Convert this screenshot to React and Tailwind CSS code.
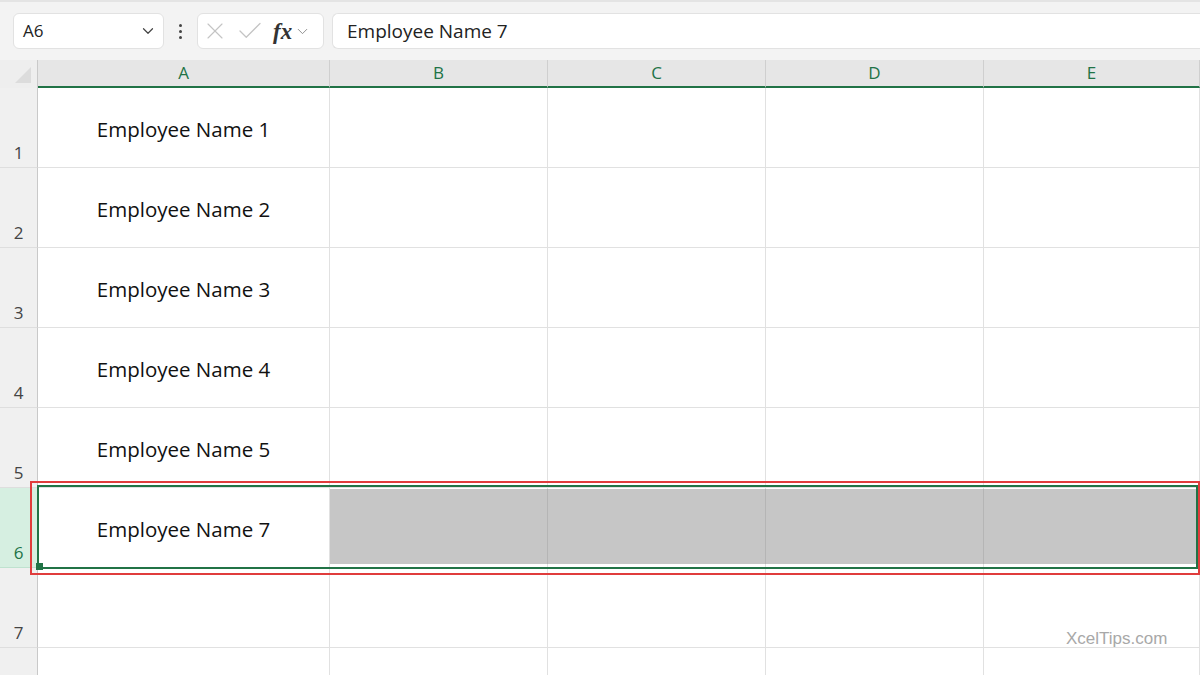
import { ChevronDown, X, Check } from 'lucide-react';

const COLS = ['A', 'B', 'C', 'D', 'E'];
const COL_W = ['w-[292px]', 'w-[218px]', 'w-[218px]', 'w-[218px]', 'flex-1'];

const ROWS = [
  { n: 1, text: 'Employee Name 1' },
  { n: 2, text: 'Employee Name 2' },
  { n: 3, text: 'Employee Name 3' },
  { n: 4, text: 'Employee Name 4' },
  { n: 5, text: 'Employee Name 5' },
  { n: 6, text: 'Employee Name 7', active: true },
  { n: 7, text: '' },
  { n: 8, text: '', hideNum: true },
];

function Toolbar() {
  return (
    <div className="flex h-[60px] items-center border-t-2 border-[#e4e4e4] bg-[#f3f3f3] pl-[13px]">
      <div className="flex h-[36px] w-[151px] items-center justify-between rounded-[6px] border border-[#e2e2e2] bg-white pl-[9px] pr-[6px] text-[17px] text-[#222]">
        <span>A6</span>
        <ChevronDown size={18} strokeWidth={1.6} className="text-[#444]" />
      </div>
      <div className="flex w-[33px] flex-col items-center gap-[3px]">
        <span className="h-[3px] w-[3px] rounded-full bg-[#444]" />
        <span className="h-[3px] w-[3px] rounded-full bg-[#444]" />
        <span className="h-[3px] w-[3px] rounded-full bg-[#444]" />
      </div>
      <div className="flex h-[36px] w-[127px] items-center rounded-[6px] border border-[#e2e2e2] bg-white pl-[3px]">
        <X size={28} strokeWidth={1} className="text-[#c4c4c4]" />
        <Check size={30} strokeWidth={1} className="ml-[6px] text-[#c4c4c4]" />
        <span className="ml-[8px] font-['Liberation_Serif',serif] text-[23px] font-bold italic leading-none text-[#333]">
          fx
        </span>
        <ChevronDown size={17} strokeWidth={1.3} className="ml-[2px] text-[#888]" />
      </div>
      <div className="ml-[8px] flex h-[36px] flex-1 items-center rounded-l-[6px] border border-r-0 border-[#e2e2e2] bg-white pl-[14px] text-[19px] text-[#222]">
        Employee Name 7
      </div>
    </div>
  );
}

function HeaderRow() {
  return (
    <div className="flex h-[28px]">
      <div className="relative w-[38px] shrink-0 border-r border-[#c9c9c9] bg-[#eeeeee]">
        <svg width="20" height="20" className="absolute bottom-[3px] right-[4px]" viewBox="0 0 20 20">
          <polygon points="18,2 18,18 2,18" fill="#dcdcdc" />
        </svg>
      </div>
      {COLS.map((c, i) => (
        <div
          key={c}
          className={`${COL_W[i]} flex items-center justify-center border-b-2 border-r border-b-[#217346] border-r-[#cfcfcf] bg-[#e6e6e6] text-[17px] text-[#217346]`}
        >
          {c}
        </div>
      ))}
    </div>
  );
}

function Row({ row }) {
  return (
    <div className="flex h-[80px]">
      <div
        className={`flex w-[38px] shrink-0 items-end justify-center border-b border-r pb-[2px] text-[17px] ${
          row.active
            ? 'border-b-[#bfe2cf] border-r-[#c9c9c9] bg-[#d6efe1] text-[#217346]'
            : 'border-b-[#dedede] border-r-[#c9c9c9] bg-[#f0f0f0] text-[#444]'
        }`}
      >
        {row.hideNum ? '' : row.n}
      </div>
      {COLS.map((c, i) => (
        <div
          key={c}
          className={`${COL_W[i]} flex items-center justify-center border-b border-r border-[#e1e1e1] pt-[4px] text-[20.5px] font-medium text-[#111]`}
        >
          {i === 0 ? row.text : ''}
        </div>
      ))}
    </div>
  );
}

export default function App() {
  return (
    <div className="relative h-[675px] w-[1200px] overflow-hidden bg-white font-['Open_Sans',sans-serif]">
      <Toolbar />
      <HeaderRow />
      {ROWS.map((r) => (
        <Row key={r.n} row={r} />
      ))}

      {/* selected row: grey fill on B:E, green range border, red callout */}
      <div className="absolute left-[330px] top-[489px] flex h-[75px] w-[867px]">
        <div className="w-[218px] border-r border-[#b5b5b5] bg-[#c6c6c6]" />
        <div className="w-[218px] border-r border-[#b5b5b5] bg-[#c6c6c6]" />
        <div className="w-[218px] border-r border-[#b5b5b5] bg-[#c6c6c6]" />
        <div className="flex-1 bg-[#c6c6c6]" />
      </div>
      <div className="absolute left-[37px] top-[485px] h-[84px] w-[1161px] border-2 border-[#217346]" />
      <div className="absolute left-[36px] top-[563px] h-[7px] w-[7px] bg-[#217346]" />
      <div className="absolute left-[30px] top-[481px] h-[94px] w-[1170px] border-2 border-[#e03c3c]" />

      <div className="absolute left-[1066px] top-[626px] font-['Liberation_Sans',sans-serif] text-[17px] text-[#a8a8a8]">
        XcelTips.com
      </div>
    </div>
  );
}
